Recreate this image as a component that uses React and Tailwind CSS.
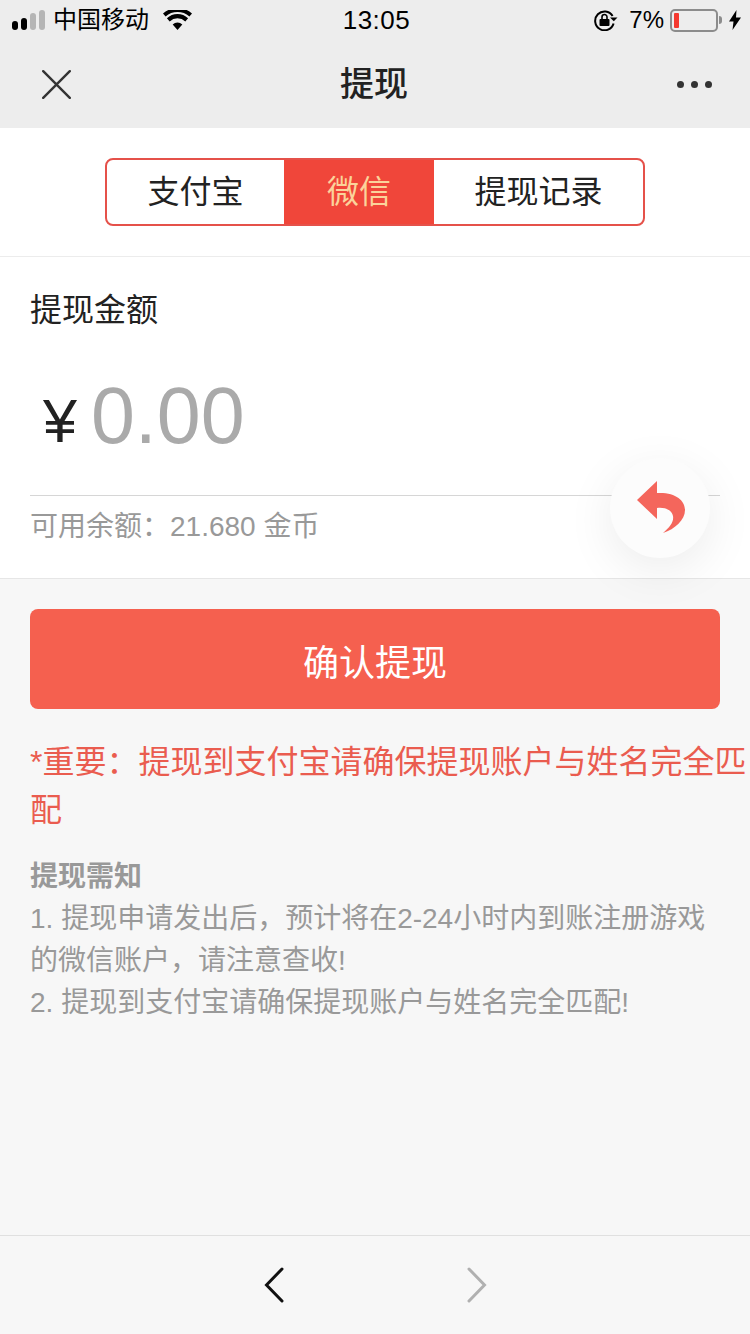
import React from 'react'

const sans = 'font-["Liberation_Sans","Noto_Sans_CJK_SC",sans-serif]'

function StatusBar() {
  return (
    <div className="flex h-[40px] items-center justify-between pl-[12px] pr-[9px] text-black">
      <div className="flex w-[200px] items-center">
        <div className="flex items-end gap-[3px]">
          <span className="h-[9px] w-[6px] rounded-full bg-black" />
          <span className="h-[12px] w-[6px] rounded-full bg-black" />
          <span className="h-[17px] w-[6px] rounded-full bg-[#b5b5b5]" />
          <span className="h-[20px] w-[6px] rounded-full bg-[#b5b5b5]" />
        </div>
        <span className="ml-[8px] text-[24px] leading-none">中国移动</span>
        <svg className="ml-[14px]" width="29" height="20" viewBox="0 0 29 20">
          <path d="M14.5 20l-4.8-5.6a7 7 0 0 1 9.6 0z" fill="#000" />
          <path d="M6.7 11.4a11.4 11.4 0 0 1 15.6 0l2.8-3.1a15.4 15.4 0 0 0-21.2 0z" fill="#000" />
          <path d="M2.6 6.6a18 18 0 0 1 23.8 0L29 3.6a21.6 21.6 0 0 0-29 0z" fill="#000" />
        </svg>
      </div>
      <span className="text-[26px] font-medium leading-none tracking-[0.5px]">13:05</span>
      <div className="flex w-[200px] items-center justify-end">
        <svg width="24" height="22" viewBox="0 0 24 22">
          <path d="M18.6 7A9.4 9.4 0 1 0 19.6 14.5" fill="none" stroke="#000" strokeWidth="2" />
          <path d="M16 8.5h7.5l-3.7 3.8z" fill="#000" />
          <rect x="5.5" y="10" width="10" height="7" rx="1" fill="#000" />
          <path d="M8 10V8a2.5 2.5 0 0 1 5 0v2" fill="none" stroke="#000" strokeWidth="1.6" />
        </svg>
        <span className="ml-[11px] text-[24px] leading-none">7%</span>
        <div className="ml-[6px] flex h-[23px] w-[48px] items-center rounded-[5px] border-2 border-[#8c8c8c] pl-[2px]">
          <span className="h-[15px] w-[5px] rounded-[1px] bg-[#f5392f]" />
        </div>
        <span className="ml-[1px] h-[8px] w-[3px] rounded-r-full bg-[#8c8c8c]" />
        <svg className="ml-[7px]" width="12" height="20" viewBox="0 0 12 20">
          <path d="M7.5 0L0 11.5h4.5L3.5 20 12 7.5H7z" fill="#000" />
        </svg>
      </div>
    </div>
  )
}

function NavBar() {
  return (
    <div className="flex h-[88px] items-center justify-between pl-[42px] pr-[38px]">
      <svg width="29" height="29" viewBox="0 0 29 29">
        <path d="M1.2 1.2l26.6 26.6M27.8 1.2L1.2 27.8" stroke="#333" strokeWidth="2.4" strokeLinecap="round" />
      </svg>
      <span className="text-[34px] font-medium leading-none text-[#222]">提现</span>
      <div className="flex gap-[7px]">
        <span className="h-[7px] w-[7px] rounded-full bg-[#333]" />
        <span className="h-[7px] w-[7px] rounded-full bg-[#333]" />
        <span className="h-[7px] w-[7px] rounded-full bg-[#333]" />
      </div>
    </div>
  )
}

function Tabs() {
  return (
    <div className="flex h-[129px] items-start justify-center border-b border-[#ececec] bg-white pt-[30px]">
      <div className="flex h-[68px] w-[540px] overflow-hidden rounded-[8px] border-2 border-[#e5514a] text-[32px] text-[#222]">
        <div className="flex w-[177px] items-center justify-center">支付宝</div>
        <div className="flex w-[150px] items-center justify-center bg-[#f0463a] text-[#fbd39b]">微信</div>
        <div className="flex flex-1 items-center justify-center">提现记录</div>
      </div>
    </div>
  )
}

export default function App() {
  return (
    <div className={`relative flex h-[1334px] w-[750px] flex-col overflow-hidden bg-[#f7f7f7] ${sans}`}>
      <div className="bg-[#ededed]">
        <StatusBar />
        <NavBar />
      </div>
      <Tabs />

      <div className="h-[322px] border-b border-[#e6e6e6] bg-white px-[30px]">
        <div className="pt-[33px] text-[32px] leading-[40px] text-[#222]">提现金额</div>
        <div className="mt-[30px] flex h-[136px] items-center border-b border-[#d6d6d6] pb-[24px]">
          <span className="ml-[13px] mt-[11px] text-[61px] leading-none text-[#222]">¥</span>
          <span className="ml-[14px] text-[79px] leading-none text-[#aaa]">0.00</span>
        </div>
        <div className="pt-[14px] text-[28px] leading-[34px] text-[#999]">可用余额：21.680 金币</div>
      </div>

      <div className="flex-1 pt-[30px]">
        <div className="mx-[30px] flex h-[100px] items-center justify-center rounded-[8px] bg-[#f5604f] pt-[10px] text-[36px] text-white">确认提现</div>
        <div className="mt-[29px] pl-[30px] text-[32px] leading-[48px] text-[#ea5c4f]">*重要：提现到支付宝请确保提现账户与姓名完全匹配</div>
        <div className="mt-[22px] px-[30px] text-[28px] leading-[42px] text-[#999]">
          <div className="font-bold">提现需知</div>
          <div>1. 提现申请发出后，预计将在2-24小时内到账注册游戏的微信账户，请注意查收!</div>
          <div>2. 提现到支付宝请确保提现账户与姓名完全匹配!</div>
        </div>
      </div>

      <div className="flex h-[99px] items-center justify-center gap-[183px] border-t border-[#e0e0e0] bg-[#f7f7f7]">
        <svg width="20" height="36" viewBox="0 0 20 36">
          <path d="M18 2L2.5 18 18 34" fill="none" stroke="#111" strokeWidth="3" strokeLinecap="round" />
        </svg>
        <svg width="20" height="36" viewBox="0 0 20 36">
          <path d="M2 2l15.5 16L2 34" fill="none" stroke="#b0b0b0" strokeWidth="3" strokeLinecap="round" />
        </svg>
      </div>

      {/* floating back button */}
      <div className="absolute left-[610px] top-[458px] flex h-[100px] w-[100px] items-center justify-center rounded-full bg-[#fcfcfc] shadow-[0_12px_48px_rgba(0,0,0,0.08)]">
        <svg className="mb-[3px] ml-[2px]" width="48" height="53" viewBox="0 0 48 53">
          <path d="M0 20L20 1v12C38 12 48 20 48 30c0 10-10 19-22 23 7-6 11-11 10-17-1-6-8-9-16-8v11z" fill="#f4665c" />
        </svg>
      </div>
    </div>
  )
}
